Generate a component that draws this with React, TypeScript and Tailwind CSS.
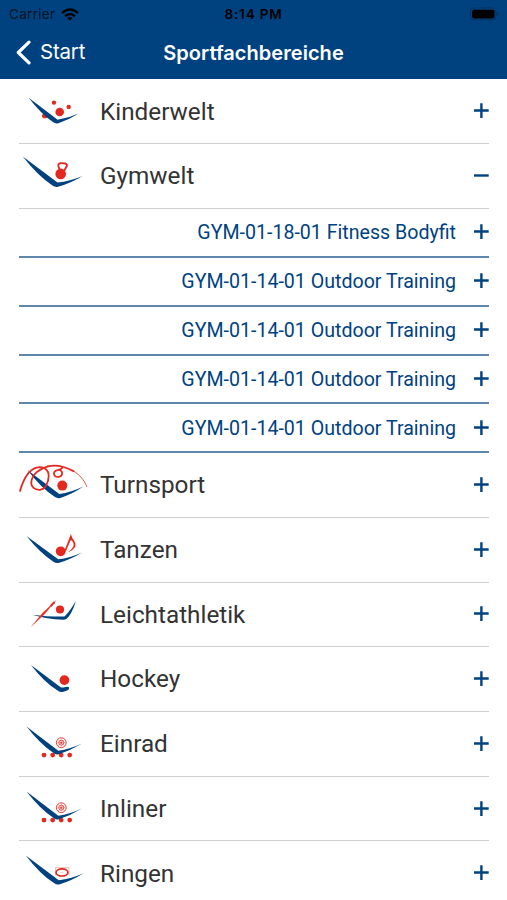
import React, { useState } from "react";

const Swoosh: React.FC<{ d: string }> = ({ d }) => <path d={d} fill="#00427f" />;

const Dot: React.FC<{ x: number; y: number; r: number }> = ({ x, y, r }) => (
  <circle cx={x} cy={y} r={r} fill="#e3291f" />
);

const Wheel = () => (
  <g fill="none" stroke="#e4403b">
    <circle cx="42.3" cy="31.1" r="4.9" strokeWidth="1" />
    <circle cx="42.3" cy="31.1" r="2.5" strokeWidth="0.9" />
    <circle cx="42.3" cy="31.1" r="1" fill="#e3291f" stroke="none" />
    <path d="M42.3 26.2v9.8M37.4 31.1h9.8M38.9 27.7l6.8 6.8M45.7 27.7l-6.8 6.8" strokeWidth="0.35" />
  </g>
);

const RollerIcon = () => (
  <>
    <Dot x={25} y={43.5} r={2.4} />
    <Dot x={33.7} y={43.5} r={2.4} />
    <Dot x={42.2} y={43.5} r={2.4} />
    <Dot x={50.7} y={43.5} r={2.4} />
    <Swoosh d="M7.5 14.8L39.3 39.2Q51 37.5 63 31.9Q52 38.6 39.8 42.6Q37.6 43.4 35.3 41.9Q21.5 32.8 7.5 14.8Z" />
    <Wheel />
  </>
);

const icons: Record<string, React.ReactNode> = {
  Kinderwelt: (
    <>
      <Dot x={35} y={24} r={2.2} />
      <Dot x={49.7} y={28.3} r={2.2} />
      <ellipse cx="26.6" cy="36.9" rx="3.7" ry="2.5" transform="rotate(-18 26.6 36.9)" fill="#e3291f" />
      <Swoosh d="M9.7 19.2L38.6 41.2Q49 39.8 59.7 35Q50 41.3 39.3 44.6Q36.8 45.4 34.3 43.7Q22 35.5 9.7 19.2Z" />
      <Dot x={40.7} y={33.4} r={4.3} />
    </>
  ),
  Gymwelt: (
    <>
      <Swoosh d="M3.8 13L38.5 38.9Q51 37.6 63.7 32.3Q52.5 39.2 39 43.1Q36.4 43.9 33.8 42.2Q19 32.5 3.8 13Z" />
      <Dot x={41.7} y={30.3} r={5.3} />
      <path d="M41 27L39.4 22.6Q38.8 20.1 41.3 19.7Q43.7 19.2 46.2 19.9Q48.7 20.6 47.6 23L44.8 27.6" fill="none" stroke="#e3291f" strokeWidth="1.9" />
    </>
  ),
  Turnsport: (
    <>
      <Swoosh d="M8.5 17.5L40.3 41.4Q52 40 64.3 34Q53.5 41.6 41.2 45.4Q38.6 46.2 36 44.5Q22 35.5 8.5 17.5Z" />
      <g fill="none" stroke="#e3291f" strokeLinecap="round">
        <path d="M1 38.3C4 28 8.5 17.5 17.5 15C24.5 13 29.8 17.2 29.7 23.5C29.5 30.5 26 37 20.8 37.2C15.8 37.3 11.8 34.5 12.3 29.5C13 22 20.5 15.8 29 13.7" strokeWidth="1.8" />
        <path d="M29 13.7C38 11.5 47.5 14.8 54.5 18.5" strokeWidth="1.8" />
        <path d="M54.5 18.5C61 22.3 65.2 27.5 67.7 33.8" strokeWidth="0.8" />
        <path d="M43.3 15C42 18.2 37 16.4 35.4 19.3C33.8 22.4 36.7 24.9 39.8 24.3C43.7 23.5 44.4 19.2 40.8 17.4" strokeWidth="1.7" />
      </g>
      <Dot x={43.3} y={33} r={5} />
    </>
  ),
  Tanzen: (
    <>
      <Swoosh d="M7.5 18.4L39.2 41.7Q51 40.3 63 34.8Q52.5 41.4 40.2 45.1Q37.3 46 34.8 44.3Q21 35.5 7.5 18.4Z" />
      <Dot x={41.7} y={33.7} r={4.9} />
      <path d="M45.4 33.4L52 16.2C52.5 21.5 56.7 23 56.5 27.5C56.3 30.7 52.7 33.5 49 34.7C52 32.3 54.6 29.8 54.7 27.2C54.8 24.8 53 23.3 51.7 22.4L46.8 34Z" fill="#e3291f" />
    </>
  ),
  Leichtathletik: (
    <>
      <Swoosh d="M13.3 33.1C24 34.5 35 35.1 45.5 34.9C50 30.5 53.5 25 56.8 19.3C55.2 25.5 52 32.3 48.8 36C47.5 37.7 46 38.2 44 38.1C33 37.8 23.5 36.3 13.3 33.1Z" />
      <path d="M12.5 44.6L23.5 31.5L37.2 18.6L25.2 33Z" fill="#e3291f" stroke="#e8645e" strokeWidth="0.3" />
      <path d="M31.5 24.6L35.6 20.4" stroke="#e3291f" strokeWidth="2" />
      <Dot x={41} y={27.9} r={4.1} />
    </>
  ),
  Hockey: (
    <>
      <Swoosh d="M12 18.3L41.3 40.3Q43 41.3 45.5 40.6Q48.5 39.6 50 40.7Q50.8 42.6 48.6 43.7Q46 45 43.5 45.3Q41 45.7 39 44.2Q24.5 35 12 18.3Z" />
      <Dot x={45.4} y={33.5} r={4.9} />
    </>
  ),
  Einrad: <RollerIcon />,
  Inliner: <RollerIcon />,
  Ringen: (
    <>
      <Swoosh d="M6.8 14.8L39.8 39.7Q52 38.2 64.5 32.6Q53.5 39.7 40.8 43.6Q38 44.5 35.3 42.7Q21 33.5 6.8 14.8Z" />
      <path d="M36.5 35V27H50V35" fill="none" stroke="#f0a5a1" strokeWidth="0.7" />
      <ellipse cx="43" cy="31.8" rx="5.9" ry="3.6" fill="#fff" stroke="#e3291f" strokeWidth="1.7" />
      <path d="M41 31.8h4" stroke="#f3b7b4" strokeWidth="0.6" />
    </>
  ),
};

const courses = [
  "GYM-01-18-01 Fitness Bodyfit",
  "GYM-01-14-01 Outdoor Training",
  "GYM-01-14-01 Outdoor Training",
  "GYM-01-14-01 Outdoor Training",
  "GYM-01-14-01 Outdoor Training",
];

const Toggle: React.FC<{ open?: boolean }> = ({ open }) => (
  <svg className="h-4 w-[15px] shrink-0" viewBox="0 0 15 16" stroke="#00427f" strokeWidth="2.4">
    <path d={open ? "M0 7.5h14.7" : "M0 7.5h14.7M7.4 0.3v14.6"} />
  </svg>
);

const StatusBar = () => (
  <div className="grid h-7 grid-cols-3 items-center px-2 text-[13.5px] text-[#06121f]">
    <div className="flex items-center gap-1.5 pl-px">
      <span className="tracking-[0.3px]">Carrier</span>
      <svg className="h-[13px] w-[18px]" viewBox="0 0 18 13" fill="none" stroke="#000" strokeWidth="2.3">
        <path d="M1 5Q9 -2 17 5M4 8.2Q9 4 14 8.2" />
        <path d="M9 12.8L6.3 10.1Q9 8 11.7 10.1Z" fill="#000" stroke="none" />
      </svg>
    </div>
    <span className="text-center font-semibold tracking-[0.8px] text-black">8:14 PM</span>
    <svg className="h-[14px] w-[29px] justify-self-end" viewBox="0 0 29 14">
      <rect x="0.5" y="1" width="25.5" height="12" rx="3.5" fill="none" stroke="#00305f" />
      <rect x="2" y="2.7" width="22.5" height="8.8" rx="2" />
      <path d="M27.3 5v4q1.4-.6 1.4-2t-1.4-2" fill="#00305f" />
    </svg>
  </div>
);

const App: React.FC = () => {
  const [open, setOpen] = useState<string | null>("Gymwelt");

  return (
    <div className="h-[900px] w-[507px] overflow-hidden bg-white font-['Roboto',sans-serif]">
      <header className="h-[79px] bg-[#00427f] font-['Inter',sans-serif]">
        <StatusBar />
        <div className="grid h-[49px] grid-cols-[1fr_auto_1fr] items-center px-4 text-white">
          <button className="flex items-center gap-2 text-[20.5px] tracking-[-0.2px]">
            <svg className="h-[25px] w-4" viewBox="0 0 16 25" fill="none" stroke="#fff" strokeWidth="3.2">
              <path d="M13 2.2L2.3 12.5L13 22.8" strokeLinecap="round" strokeLinejoin="round" />
            </svg>
            Start
          </button>
          <h1 className="text-[20px] font-semibold tracking-[0.04px]">Sportfachbereiche</h1>
        </div>
      </header>

      <main className="pt-[0.6px] pr-[18px] pl-[19px]">
        {Object.keys(icons).map((name) => (
          <section key={name}>
            <button
              className="flex h-[64.7px] w-full items-center border-b border-[#cfcfcf] text-left"
              onClick={() => setOpen(open === name ? null : name)}
            >
              <svg className="h-16 w-[69px] shrink-0" viewBox="0 0.4 69 64">
                {icons[name]}
              </svg>
              <span className="ml-3 flex-1 pt-px text-[24.3px] text-[#333333]">{name}</span>
              <Toggle open={open === name} />
            </button>
            {open === name && name === "Gymwelt" && (
              <ul>
                {courses.map((course, i) => (
                  <li
                    key={i}
                    className="flex h-[48.86px] items-center justify-end gap-[18px] border-b-2 border-[#5f87ae] text-[19.6px] text-[#00427f]"
                  >
                    <span className="pt-px">{course}</span>
                    <Toggle />
                  </li>
                ))}
              </ul>
            )}
          </section>
        ))}
      </main>
    </div>
  );
};

export default App;
